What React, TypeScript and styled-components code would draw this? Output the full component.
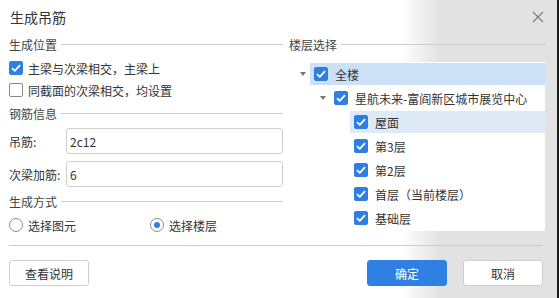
import React from "react";
import styled, { createGlobalStyle } from "styled-components";

const Global = createGlobalStyle`
  html, body { margin: 0; padding: 0; }
  body {
    font-family: "Microsoft YaHei", "Noto Sans CJK SC", "Noto Sans", sans-serif;
    color: #333;
    font-size: 12px;
  }
`;

const Dialog = styled.div`
  width: 559px;
  height: 298px;
  box-sizing: border-box;
  border-right: 2px solid #1e1e1e;
  background: linear-gradient(to right, #ffffff 72%, #e2e2e2 79%);
  display: flex;
  flex-direction: column;
  overflow: hidden;
`;

const Header = styled.div`
  height: 34px;
  display: flex;
  align-items: center;
  justify-content: space-between;
  padding: 0 13px 0 10px;
`;

const Title = styled.div`
  font-size: 14px;
  color: #333;
`;

const Close = styled.button`
  border: none;
  background: transparent;
  padding: 0;
  width: 12px;
  height: 12px;
  display: flex;
  cursor: pointer;
`;

const Body = styled.div`
  display: grid;
  grid-template-columns: 274px 256px;
  column-gap: 6px;
  padding: 0 0 0 9px;
`;

const Column = styled.div`
  display: flex;
  flex-direction: column;
`;

const SecHeader = styled.div<{ $mt?: number }>`
  height: 20px;
  margin-top: ${(p) => p.$mt ?? 0}px;
  display: flex;
  align-items: center;
  gap: 4px;
  color: #444;
  &::after {
    content: "";
    flex: 1;
    height: 1px;
    background: #cccccc;
  }
`;

const OptionRow = styled.label<{ $mt?: number }>`
  height: 22px;
  margin-top: ${(p) => p.$mt ?? 0}px;
  display: flex;
  align-items: center;
  gap: 5px;
`;

const Box = styled.span<{ $checked?: boolean }>`
  width: 14px;
  height: 14px;
  box-sizing: border-box;
  border-radius: 2px;
  flex: none;
  display: flex;
  align-items: center;
  justify-content: center;
  background: ${(p) => (p.$checked ? "#2f7fe2" : "#fff")};
  border: 1px solid ${(p) => (p.$checked ? "#2f7fe2" : "#8a8a8a")};
`;

const FieldRow = styled.div<{ $mt?: number }>`
  height: 26px;
  margin-top: ${(p) => p.$mt ?? 0}px;
  display: flex;
  align-items: center;
`;

const FieldLabel = styled.span`
  width: 57px;
  flex: none;
`;

const Input = styled.input`
  flex: 1;
  height: 26px;
  box-sizing: border-box;
  border: 1px solid #cfcfcf;
  border-radius: 3px;
  padding: 0 3px;
  font-family: inherit;
  font-size: 12px;
  color: #333;
  outline: none;
  background: #fff;
`;

const RadioRow = styled.div<{ $mt?: number }>`
  height: 22px;
  margin-top: ${(p) => p.$mt ?? 0}px;
  display: grid;
  grid-template-columns: 141px 1fr;
  align-items: center;
`;

const RadioItem = styled.label`
  display: flex;
  align-items: center;
  gap: 5px;
`;

const Radio = styled.span<{ $on?: boolean }>`
  width: 14px;
  height: 14px;
  box-sizing: border-box;
  border-radius: 50%;
  border: 1px solid #8f8f8f;
  background: #fff;
  display: flex;
  align-items: center;
  justify-content: center;
  &::after {
    content: "";
    width: 6px;
    height: 6px;
    border-radius: 50%;
    background: ${(p) => (p.$on ? "#2f7fe2" : "transparent")};
  }
`;

const TreePanel = styled.div`
  margin-top: 8px;
  background: #fff;
  height: 169px;
  box-sizing: border-box;
  padding-top: 1px;
  display: flex;
  flex-direction: column;
  gap: 2px;
`;

const TreeRow = styled.div<{ $level: number }>`
  height: 22px;
  display: flex;
  align-items: stretch;
  padding-left: ${(p) => 7 + p.$level * 20}px;
`;

const Caret = styled.span<{ $show?: boolean }>`
  width: 14px;
  flex: none;
  display: flex;
  align-items: center;
  justify-content: center;
  &::before {
    content: "";
    display: ${(p) => (p.$show ? "block" : "none")};
    border-left: 3.5px solid transparent;
    border-right: 3.5px solid transparent;
    border-top: 4px solid #777;
  }
`;

const TreeItem = styled.div<{ $hl?: "strong" | "soft" }>`
  flex: 1;
  display: flex;
  align-items: center;
  gap: 7px;
  padding-left: 4px;
  background: ${(p) =>
    p.$hl === "strong" ? "#cce0f7" : p.$hl === "soft" ? "#dfeaf8" : "transparent"};
`;

const Footer = styled.div`
  margin: 9px 14px 0 9px;
  border-top: 1px solid #cccccc;
  padding-top: 14px;
  display: flex;
  align-items: center;
`;

const Button = styled.button<{ $primary?: boolean }>`
  width: 80px;
  height: 26px;
  box-sizing: border-box;
  border-radius: 3px;
  font-family: inherit;
  font-size: 12px;
  cursor: pointer;
  color: ${(p) => (p.$primary ? "#fff" : "#333")};
  background: ${(p) => (p.$primary ? "#2f80e2" : "#fff")};
  border: 1px solid ${(p) => (p.$primary ? "#2f80e2" : "#cfcfcf")};
`;

const Spacer = styled.div`
  flex: 1;
`;

const ButtonGap = styled.div`
  width: 16px;
`;

const Check = () => (
  <svg width="10" height="8" viewBox="0 0 10 8">
    <path d="M1 4.2 L3.8 6.8 L9 1.2" fill="none" stroke="#fff" strokeWidth="1.8" />
  </svg>
);

const tree: { label: string; level: number; caret?: boolean; hl?: "strong" | "soft" }[] = [
  { label: "全楼", level: 0, caret: true, hl: "strong" },
  { label: "星航未来-富阎新区城市展览中心", level: 1, caret: true },
  { label: "屋面", level: 2, hl: "soft" },
  { label: "第3层", level: 2 },
  { label: "第2层", level: 2 },
  { label: "首层（当前楼层）", level: 2 },
  { label: "基础层", level: 2 },
];

export default function App() {
  return (
    <>
      <Global />
      <Dialog>
        <Header>
          <Title>生成吊筋</Title>
          <Close aria-label="close">
            <svg width="12" height="12" viewBox="0 0 12 12">
              <path d="M1 1 L11 11 M11 1 L1 11" stroke="#7a7a7a" strokeWidth="1.1" />
            </svg>
          </Close>
        </Header>
        <Body>
          <Column>
            <SecHeader>生成位置</SecHeader>
            <OptionRow $mt={3}>
              <Box $checked>
                <Check />
              </Box>
              主梁与次梁相交，主梁上
            </OptionRow>
            <OptionRow>
              <Box />
              同截面的次梁相交，均设置
            </OptionRow>
            <SecHeader $mt={2}>钢筋信息</SecHeader>
            <FieldRow $mt={5}>
              <FieldLabel>吊筋:</FieldLabel>
              <Input defaultValue="2c12" />
            </FieldRow>
            <FieldRow $mt={7}>
              <FieldLabel>次梁加筋:</FieldLabel>
              <Input defaultValue="6" />
            </FieldRow>
            <SecHeader $mt={4}>生成方式</SecHeader>
            <RadioRow $mt={3}>
              <RadioItem>
                <Radio />
                选择图元
              </RadioItem>
              <RadioItem>
                <Radio $on />
                选择楼层
              </RadioItem>
            </RadioRow>
          </Column>
          <Column>
            <SecHeader>楼层选择</SecHeader>
            <TreePanel>
              {tree.map((n) => (
                <TreeRow key={n.label} $level={n.level}>
                  <Caret $show={n.caret} />
                  <TreeItem $hl={n.hl}>
                    <Box $checked>
                      <Check />
                    </Box>
                    {n.label}
                  </TreeItem>
                </TreeRow>
              ))}
            </TreePanel>
          </Column>
        </Body>
        <Footer>
          <Button>查看说明</Button>
          <Spacer />
          <Button $primary>确定</Button>
          <ButtonGap />
          <Button>取消</Button>
        </Footer>
      </Dialog>
    </>
  );
}
